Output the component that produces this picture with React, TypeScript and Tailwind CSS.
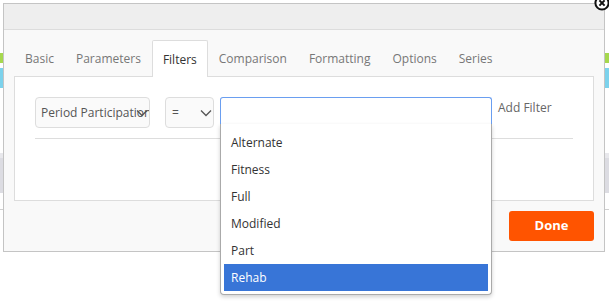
import React, { useState } from 'react';

const tabs = ['Basic', 'Parameters', 'Filters', 'Comparison', 'Formatting', 'Options', 'Series'];
const options = ['Alternate', 'Fitness', 'Full', 'Modified', 'Part', 'Rehab'];

const Chevron: React.FC = () => (
  <svg width="12" height="8" viewBox="0 0 12 8" fill="none" stroke="#555" strokeWidth={1.3}>
    <path d="M1 1.5l5 5 5-5" />
  </svg>
);

const App: React.FC = () => {
  const [active] = useState('Filters');
  const [selected] = useState('Rehab');

  return (
    <div className="relative w-[609px] h-[302px] overflow-hidden bg-white" style={{ fontFamily: '"Open Sans", "Noto Sans", sans-serif' }}>
      {/* page behind the dialog */}
      <div className="flex flex-col">
        <div className="h-[53px]" />
        <div className="h-[10px] bg-[#a6d84e]" />
        <div className="h-[5px]" />
        <div className="h-[20px] bg-[#7cd2ec]" />
        <div className="h-[65px]" />
        <div className="h-[5px] bg-[#e8e8ec]" />
        <div className="h-[35px] bg-[#dcdce2]" />
        <div className="h-[16px]" />
        <div className="h-px bg-[#cfcfcf]" />
      </div>

      {/* dialog */}
      <div className="absolute left-[3px] top-[3px] w-[602px] h-[249px] border border-[#c4c4c4] bg-[#f9f9f9] flex flex-col">
        <div className="h-[26px] bg-[#eeeeee] border-b border-[#dcdcdc]" />
        <svg className="absolute -top-[9px] -right-[6px]" width="16" height="16" viewBox="0 0 16 16">
          <circle cx="8" cy="8" r="6.6" fill="#fff" stroke="#111" strokeWidth={2} />
          <path d="M5.4 5.4l5.2 5.2M10.6 5.4l-5.2 5.2" stroke="#111" strokeWidth={2} />
        </svg>

        <div className="px-[10px] pt-[10px]">
          <div className="flex h-[36px] text-[12px]">
            {tabs.map(t => (
              <div
                key={t}
                className={
                  t === active
                    ? 'px-[10px] pt-[2px] flex items-center border border-[#dddddd] border-b-0 bg-white text-[#333] rounded-t-[2px] -mb-px relative z-10 h-[37px]'
                    : 'px-[10px] pt-[2px] flex items-center border border-transparent text-[#777]'
                }
              >
                {t}
              </div>
            ))}
          </div>

          <div className="h-[125px] border border-[#dddddd] bg-white px-[20px] pt-[20px]">
            <div className="flex items-start text-[12px] text-[#555]">
              <div className="relative w-[115px] h-[31px] border border-[#dddddd] rounded-[4px] bg-[#fafafa] flex items-center pl-[5px] overflow-hidden">
                <span className="whitespace-nowrap">Period Participation</span>
                <span className="absolute left-[100px] top-[11px]"><Chevron /></span>
              </div>
              <div className="relative ml-[15px] w-[49px] h-[31px] border border-[#dddddd] rounded-[4px] bg-[#fafafa] flex items-center pl-[6px]">
                <span>=</span>
                <span className="absolute left-[34px] top-[11px]"><Chevron /></span>
              </div>
              <div className="relative ml-[6px] w-[272px]">
                <div className="h-[28px] border border-[#6a9ef0] border-b-0 rounded-t-[3px] bg-white" />
                <div className="absolute left-0 top-[27px] w-[272px] bg-white border border-[#aaaaaa] border-t-0 rounded-b-[4px] shadow-[0_2px_4px_rgba(0,0,0,0.18)] px-[3px] pt-[5px] pb-[3px] z-20">
                  {options.map(o => (
                    <div
                      key={o}
                      className={
                        o === selected
                          ? 'h-[27px] flex items-center px-[7px] pt-px bg-[#3875d7] text-white'
                          : 'h-[27px] flex items-center px-[7px] pt-px text-[#333]'
                      }
                    >
                      {o}
                    </div>
                  ))}
                </div>
              </div>
              <div className="ml-[6px] pt-[2px] text-[#666]">Add Filter</div>
            </div>
            <div className="mt-[10px] h-px bg-[#dddddd]" />
          </div>

          <div className="flex justify-end pt-[10px]">
            <button className="w-[85px] h-[30px] rounded-[3px] bg-[#ff5400] text-white text-[13px] font-bold">Done</button>
          </div>
        </div>
      </div>
    </div>
  );
};

export default App;
